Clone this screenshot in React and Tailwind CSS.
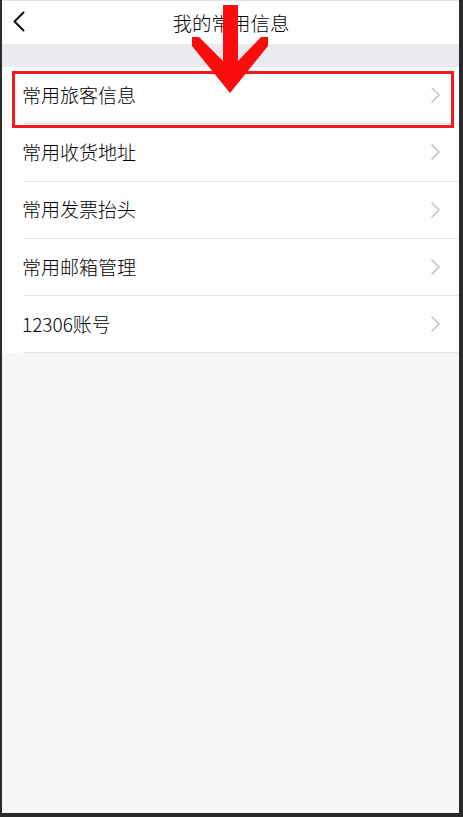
import React from 'react';

// 常用信息列表
const items = ['常用旅客信息', '常用收货地址', '常用发票抬头', '常用邮箱管理', '12306账号'];

const Chevron = () => (
  <svg width="9" height="16" viewBox="0 0 9 16" fill="none" className="shrink-0">
    <path d="M1 1l7 7-7 7" stroke="#c4c4c8" strokeWidth="1.6" strokeLinecap="round" strokeLinejoin="round" />
  </svg>
);

const Row = ({ label }) => (
  <div className="flex h-[57.3px] items-center bg-white pl-[21px]">
    <div className="flex h-full flex-1 items-center justify-between border-b border-[#e6e4ea] pr-[19px]">
      <span className="-ml-[1px] text-[19px] font-light text-black">{label}</span>
      <Chevron />
    </div>
  </div>
);

export default function App() {
  return (
    <div
      className="h-[817px] w-[463px] bg-[#2a2a2a] pb-[4px] pl-[2px] pr-[4px]"
      style={{ fontFamily: '"Noto Sans CJK SC", "Noto Sans", sans-serif' }}
    >
      <div className="relative flex h-full flex-col overflow-hidden bg-[#f7f5f8]">
        {/* 顶部导航 */}
        <div className="relative flex h-[44px] items-center justify-center border-t border-[#e4e3e8] bg-white">
          <svg width="14" height="21" viewBox="0 0 14 21" fill="none" className="absolute left-[10px] top-[10px]">
            <path d="M11.5 1.5L2.5 10.5l9 9" stroke="#111" strokeWidth="2" strokeLinecap="round" strokeLinejoin="round" />
          </svg>
          <span className="ml-[1px] text-[19.5px] font-light text-black">我的常用信息</span>
        </div>
        <div className="h-[23px] bg-[#ebeaef]" />

        <div className="flex flex-col">
          {items.map((t) => (
            <Row key={t} label={t} />
          ))}
        </div>

        {/* 标注 */}
        <div className="absolute left-[10px] top-[71px] h-[57px] w-[442px] border-[3px] border-[#f21b1b]" />
        <svg
          width="463"
          height="100"
          viewBox="0 0 463 100"
          className="absolute left-[-2px] top-0"
        >
          <polygon
            points="223,5 238,5 238,61 261,37 268,37 268,46 230,93 192,46 192,37 199,37 223,61"
            fill="#fb0d0d"
          />
        </svg>
      </div>
    </div>
  );
}
